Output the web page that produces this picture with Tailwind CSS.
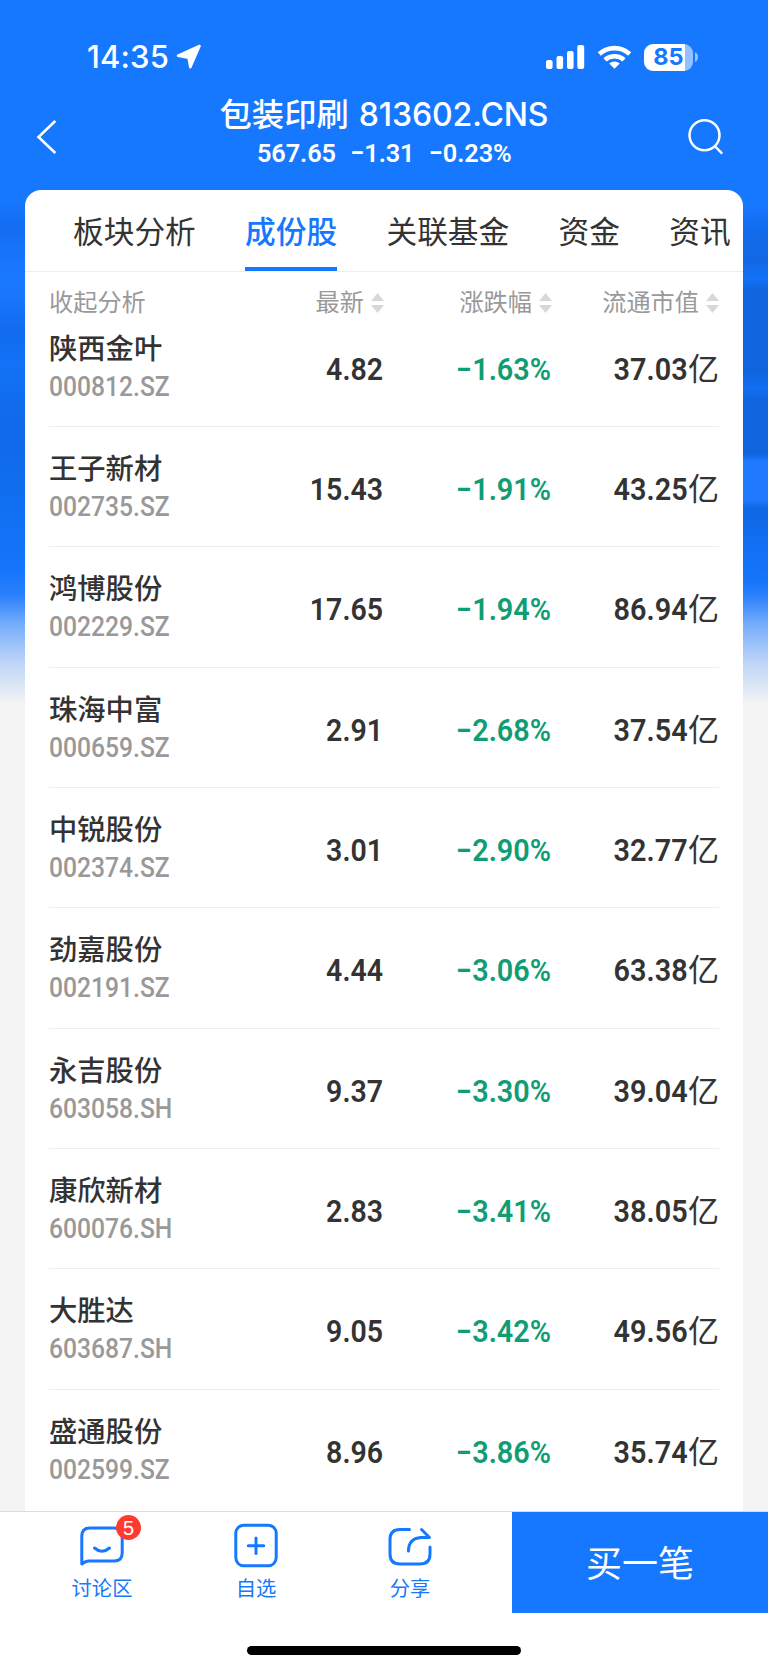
<!DOCTYPE html>
<html lang="zh-CN">
<head>
<meta charset="utf-8">
<title>包装印刷 813602.CNS</title>
<script src="https://cdn.jsdelivr.net/npm/@tailwindcss/browser@4"></script>
</head>
<body class="font-['Inter','Noto_Sans_CJK_SC',sans-serif]">
<div class="relative flex h-[1669px] w-[768px] flex-col overflow-hidden bg-[#f4f4f4]">
  <!-- blurred banner behind the card -->
  <div class="absolute inset-x-0 top-0 flex h-[704px] justify-between bg-[#1677ff]">
    <div class="w-1/2 bg-[linear-gradient(180deg,#1677ff_200px,#136df0_225px,#1a78ff_270px,#1a78ff_290px,#116cee_330px,#1272f6_365px,#1069e8_430px,#1070f2_510px,#1475fb_570px,#2a80fe_595px,#76aefb_625px,#bdd4f7_662px,#f4f4f4_704px)]"></div>
    <div class="w-1/2 bg-[linear-gradient(180deg,#1677ff_205px,#126aea_235px,#1268e4_260px,#1271f6_278px,#1065de_290px,#1065de_372px,#126ff3_388px,#1065de_400px,#1065de_454px,#1f7aff_462px,#1f7aff_500px,#0f68e4_508px,#1270f4_550px,#1475fb_580px,#2a80fe_595px,#76aefb_625px,#bdd4f7_662px,#f4f4f4_704px)]"></div>
  </div>

  <!-- status bar -->
  <div class="relative flex h-[92px] shrink-0 items-end justify-between pr-[70px] pl-[87px]">
    <div class="flex h-[70px] items-center gap-[7px] text-white">
      <span class="text-[31px] font-medium tracking-[0.150px]">14:35</span>
      <svg width="26" height="26" viewBox="0 0 26 26"><path d="M23.5 2 L14.3 23.2 L12.6 13.6 L2 11.7 Z" fill="#fff" stroke="#fff" stroke-width="2.6" stroke-linejoin="round"/></svg>
    </div>
    <div class="flex h-[70px] items-center">
      <svg width="39" height="26" viewBox="0 0 39 26" fill="#fff"><rect x="0" y="16" width="6.6" height="9" rx="2"/><rect x="10.5" y="12" width="6.6" height="13" rx="2"/><rect x="21" y="7" width="6.6" height="18" rx="2"/><rect x="31.300" y="1" width="6.900" height="24" rx="2"/></svg>
      <svg class="ml-[12px]" width="35" height="26" viewBox="0 0 35 26" fill="none" stroke="#fff" stroke-width="4.600"><path d="M2.300 10 A22.500 22.500 0 0 1 32.700 10"/><path d="M8 15.900 A14.300 14.300 0 0 1 27 15.900"/><path d="M17.500 24.800 L12.200 19.600 A8 8 0 0 1 22.800 19.600 Z" fill="#fff" stroke="none"/></svg>
      <div class="ml-[12px] flex h-[27px] w-[49px] items-center justify-center rounded-[9px] bg-[linear-gradient(90deg,#fff_41px,#93c0ff_41px)] text-[23.500px] leading-none font-bold text-[#1677ff]">85</div>
      <svg class="ml-[2px]" width="3" height="10"><path d="M0 0 Q3 1.500 3 5 T0 10Z" fill="#93c0ff"/></svg>
    </div>
  </div>

  <!-- title bar -->
  <div class="relative flex h-[98px] shrink-0 justify-between pr-[44px] pl-[36px] text-white">
    <svg class="mt-[28px]" width="21" height="34" viewBox="0 0 21 34" fill="none" stroke="#fff" stroke-width="2.600"><path d="M19.300 1 L2.500 17 L19.300 33"/></svg>
    <div class="ml-[25px] flex flex-col items-center">
      <div class="flex h-[46px] items-center gap-[10px] whitespace-nowrap"><span class="text-[32.300px] font-medium">包装印刷</span><span class="text-[32px] font-medium tracking-[-0.100px]">813602.CNS</span></div>
      <div class="flex h-[30px] scale-x-[0.955] items-center gap-[15px] font-['Roboto'] text-[26.500px] font-semibold tracking-[-0.100px]"><span>567.65</span><span>−1.31</span><span>−0.23%</span></div>
    </div>
    <svg class="mt-[26px]" width="38" height="38" viewBox="0 0 38 38" fill="none" stroke="#fff" stroke-width="2.500"><circle cx="18.500" cy="17.300" r="15"/><path d="M28.700 28 L36.200 35.700"/></svg>
  </div>

  <!-- constituents card -->
  <main class="relative mr-[25px] ml-[25px] h-[1321px] shrink-0 overflow-hidden rounded-t-[16px] bg-white text-[#333]">
    <nav class="flex h-[82px] gap-[49.300px] border-b border-[#eee] pl-[48px] text-[30.700px] whitespace-nowrap">
      <span class="pt-[19px]">板块分析</span>
      <span class="border-b-4 border-[#1677ff] pt-[19px] font-medium text-[#1677ff]">成份股</span>
      <span class="pt-[19px]">关联基金</span>
      <span class="pt-[19px]">资金</span>
      <span class="pt-[19px]">资讯</span>
    </nav>
    <div class="grid h-[34.500px] grid-cols-[166px_169px_168px_167px] pt-[13px] pl-[24px] text-[24.200px] leading-[36px] text-[#999]">
      <span class="whitespace-nowrap">收起分析</span>
      <span class="flex items-center justify-end gap-[7px]">最新<svg width="13" height="20" fill="#d8d8d8"><path d="M6.500 0L13 8H0ZM0 12H13L6.500 20Z"/></svg></span>
      <span class="flex items-center justify-end gap-[7px]">涨跌幅<svg width="13" height="20" fill="#d8d8d8"><path d="M6.500 0L13 8H0ZM0 12H13L6.500 20Z"/></svg></span>
      <span class="flex items-center justify-end gap-[7px]">流通市值<svg width="13" height="20" fill="#d8d8d8"><path d="M6.500 0L13 8H0ZM0 12H13L6.500 20Z"/></svg></span>
    </div>
    <div id="rows" class="px-[24px]"></div>
  </main>

  <!-- bottom bar -->
  <footer class="relative flex h-[158px] shrink-0 flex-col border-t border-[#ddd] bg-white">
    <div class="flex h-[101px]">
      <div class="flex w-[512px] pr-[25px] pl-[25px] text-[20.300px] leading-[28px] text-[#1677ff]">
        <div class="flex w-[154px] flex-col items-center pt-[11px]">
          <div class="relative">
            <svg width="44" height="46" viewBox="0 0 44 46" fill="none" stroke="#1677ff" stroke-width="3" stroke-linecap="round" stroke-linejoin="round"><path d="M1.800 41 V13 Q1.800 5 9.800 5 H34.200 Q42.200 5 42.200 13 V30 Q42.200 38 34.200 38 H8.500 Q6 38 1.800 41 Z"/><path d="M14.500 25 Q22 31.500 29.500 25"/></svg>
            <span class="absolute top-[-8px] left-[36px] flex size-[25px] items-center justify-center rounded-full bg-[#ff3b30] font-['Liberation_Sans'] text-[20px] leading-none text-white">5</span>
          </div>
          <span class="mt-[6px]">讨论区</span>
        </div>
        <div class="flex w-[154px] flex-col items-center pt-[11px]">
          <svg width="44" height="46" viewBox="0 0 44 46" fill="none" stroke="#1677ff" stroke-width="3" stroke-linecap="round"><rect x="1.800" y="2.200" width="40.400" height="40.600" rx="8"/><path d="M22 15 V30.500 M14.300 22.700 H29.700"/></svg>
          <span class="mt-[6px]">自选</span>
        </div>
        <div class="flex w-[154px] flex-col items-center pt-[11px]">
          <svg width="44" height="46" viewBox="0 0 44 46" fill="none" stroke="#1677ff" stroke-width="3" stroke-linecap="round" stroke-linejoin="round"><path d="M21.500 6.500 H12 Q2 6.500 2 16.500 V31 Q2 41 12 41 H32 Q42 41 42 31 V24"/><path d="M33.500 6.500 L41.500 14.500 H33 Q20.500 15.500 20.500 28"/></svg>
          <span class="mt-[6px]">分享</span>
        </div>
      </div>
      <button class="flex w-[256px] items-center justify-center bg-[#1677ff] pt-[2px] text-[36px] text-white">买一笔</button>
    </div>
    <div class="mt-[33px] h-[9px] w-[274px] self-center rounded-full bg-black"></div>
  </footer>
</div>
<template id="row">
  <div class="grid h-[120.350px] grid-cols-[166px_169px_168px_167px] border-b border-[#ececec] last:border-b-0">
    <div class="pt-[23px] whitespace-nowrap">
      <div class="name h-[38px] text-[28.300px] leading-[38px] font-medium"></div>
      <div class="code h-[38px] origin-left scale-x-[0.92] font-['Roboto'] text-[26.800px] leading-[38px] font-medium text-[#999]"></div>
    </div>
    <div class="price origin-right scale-x-[0.92] pt-[43px] pr-[1px] text-right font-['Roboto'] text-[31px] leading-[40px] font-semibold"></div>
    <div class="change origin-right scale-x-[0.93] pt-[43px] pr-[1px] text-right font-['Roboto'] text-[31px] leading-[40px] font-semibold text-[#109d75]"></div>
    <div class="flex justify-end pt-[43px] font-['Roboto'] text-[31px] leading-[40px] font-semibold"><span class="cap origin-right scale-x-[0.93]"></span><span class="-mt-[3px] font-['Noto_Sans_CJK_SC'] text-[31px] font-normal">亿</span></div>
  </div>
</template>
<script>
const stocks = [
  ['陕西金叶', '000812.SZ', '4.82', '−1.63%', '37.03'],
  ['王子新材', '002735.SZ', '15.43', '−1.91%', '43.25'],
  ['鸿博股份', '002229.SZ', '17.65', '−1.94%', '86.94'],
  ['珠海中富', '000659.SZ', '2.91', '−2.68%', '37.54'],
  ['中锐股份', '002374.SZ', '3.01', '−2.90%', '32.77'],
  ['劲嘉股份', '002191.SZ', '4.44', '−3.06%', '63.38'],
  ['永吉股份', '603058.SH', '9.37', '−3.30%', '39.04'],
  ['康欣新材', '600076.SH', '2.83', '−3.41%', '38.05'],
  ['大胜达', '603687.SH', '9.05', '−3.42%', '49.56'],
  ['盛通股份', '002599.SZ', '8.96', '−3.86%', '35.74'],
];
const list = document.getElementById('rows');
const template = document.getElementById('row');
for (const stock of stocks) {
  const row = template.content.cloneNode(true);
  ['name', 'code', 'price', 'change', 'cap'].forEach((field, i) => {
    row.querySelector('.' + field).textContent = stock[i];
  });
  list.append(row);
}
</script>
</body>
</html>
